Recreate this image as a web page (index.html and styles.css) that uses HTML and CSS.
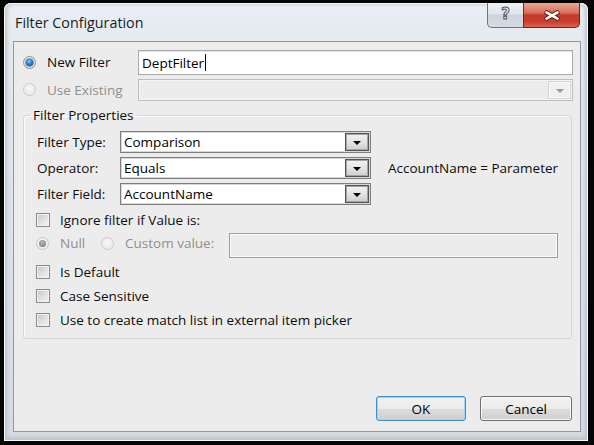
FILE: index.html
```html
<!DOCTYPE html>
<html>
<head>
<meta charset="utf-8">
<link rel="stylesheet" href="styles.css">
</head>
<body>
<div class="window">
  <div class="frame">
    <div class="titlebar">
      <div class="title">Filter Configuration</div>
      <div class="caption-buttons">
        <div class="cbtn help">?</div>
        <div class="cbtn close">
          <svg width="18" height="11" viewBox="0 0 18 11">
            <path d="M2 1.5 L16 9.5 M16 1.5 L2 9.5" stroke="#5b2119" stroke-width="4.6" fill="none"/>
            <path d="M2.6 1.9 L15.4 9.1 M15.4 1.9 L2.6 9.1" stroke="#ffffff" stroke-width="2.4" fill="none"/>
          </svg>
        </div>
      </div>
    </div>
    <div class="client">
      <div class="top-row">
        <label class="opt"><span class="radio checked"></span><span>New Filter</span></label>
        <div class="textbox">DeptFilter<span class="caret"></span></div>
      </div>
      <div class="top-row existing">
        <label class="opt disabled"><span class="radio"></span><span>Use Existing</span></label>
        <div class="combo disabled"><span class="combo-value"></span><span class="arrow"><span class="tri"></span></span></div>
      </div>
      <fieldset class="group">
        <legend>Filter Properties</legend>
        <div class="prop-grid">
          <span class="prop-label r1">Filter Type:</span>
          <div class="combo c2 r1"><span class="combo-value">Comparison</span><span class="arrow"><span class="tri"></span></span></div>
          <span class="prop-label r2">Operator:</span>
          <div class="combo c2 r2"><span class="combo-value">Equals</span><span class="arrow"><span class="tri"></span></span></div>
          <span class="expr r2">AccountName = Parameter</span>
          <span class="prop-label r3">Filter Field:</span>
          <div class="combo c2 r3"><span class="combo-value">AccountName</span><span class="arrow"><span class="tri"></span></span></div>
        </div>
        <label class="check-row first"><span class="checkbox"></span><span>Ignore filter if Value is:</span></label>
        <div class="value-row">
          <label class="opt disabled null-opt"><span class="radio checked-disabled"></span><span>Null</span></label>
          <label class="opt disabled custom-opt"><span class="radio"></span><span>Custom value:</span></label>
          <div class="textbox disabled"></div>
        </div>
        <label class="check-row gap-lg"><span class="checkbox"></span><span>Is Default</span></label>
        <label class="check-row"><span class="checkbox"></span><span>Case Sensitive</span></label>
        <label class="check-row"><span class="checkbox"></span><span>Use to create match list in external item picker</span></label>
      </fieldset>
      <div class="buttons">
        <button class="btn default">OK</button>
        <button class="btn cancel">Cancel</button>
      </div>
    </div>
  </div>
</div>
</body>
</html>
```

FILE: styles.css
```css
* { box-sizing: border-box; }
html, body { margin: 0; padding: 0; }
body {
  width: 594px;
  height: 445px;
  overflow: hidden;
  background: #000;
  font-family: "Open Sans", "Noto Sans", sans-serif;
  font-size: 13.5px;
  color: #0c0c0c;
}
.window {
  width: 594px;
  height: 445px;
  padding: 3px 6px 4px 4px;
  background: #050505;
}
.frame {
  height: 100%;
  display: flex;
  flex-direction: column;
  border-radius: 7px 7px 0 0;
  background: linear-gradient(to bottom, #eaeff4 0, #e4e9ef 40px, #d5dbe2 100%);
  box-shadow: inset 0 0 0 1px #f6f8fa, inset 0 -3px 4px #b9c0c8, inset 3px 0 4px #c3c9d0, inset -3px 0 4px #c3c9d0;
}
.titlebar {
  height: 38px;
  display: flex;
  align-items: flex-start;
  padding-left: 11px;
}
.title {
  margin-top: 10px;
  font-size: 14.3px;
  line-height: 20px;
  color: #1b1b1b;
}
.caption-buttons {
  margin-left: auto;
  margin-right: 8px;
  display: flex;
  height: 25px;
}
.cbtn {
  height: 25px;
  display: flex;
  align-items: center;
  justify-content: center;
}
.help {
  width: 36px;
  border: 1px solid #6c7582;
  border-top: none;
  border-right: none;
  border-radius: 0 0 0 5px;
  background: linear-gradient(to bottom, #eef1f4 0, #e1e6eb 45%, #cdd4dc 50%, #d6dce3 100%);
  font-family: "DejaVu Sans", sans-serif;
  font-weight: bold;
  font-size: 15px;
  color: #f2f2f2;
  -webkit-text-stroke: 1px #555;
  line-height: 1;
  padding-bottom: 2px;
}
.close {
  width: 57px;
  border: 1px solid #6a2a22;
  border-top: none;
  border-radius: 0 0 5px 0;
  background: linear-gradient(to bottom, #e9a896 0, #d8705e 40%, #c63a2a 52%, #c83e2e 78%, #d9654f 100%);
}
.client {
  flex: 1;
  margin: 0 7px 9px 9px;
  border: 1px solid #8d98a5;
  background: #ececec;
  padding: 8px 7px 10px 9px;
  display: flex;
  flex-direction: column;
}
.top-row {
  display: grid;
  grid-template-columns: 115px 1fr;
  height: 25px;
  align-items: center;
}
.top-row.existing {
  height: 22px;
  margin-top: 4px;
}
.top-row > .opt { padding-bottom: 1px; }
.opt {
  display: flex;
  align-items: center;
}
.opt.disabled { color: #8f8f8f; }
.radio {
  width: 13px;
  height: 13px;
  border-radius: 50%;
  border: 1px solid #8e9194;
  background: radial-gradient(circle at 50% 40%, #fafafa 0, #e2e2e2 60%, #cfcfcf 100%);
  margin-right: 11px;
  display: flex;
  align-items: center;
  justify-content: center;
  flex: none;
}
.radio.checked::after {
  content: "";
  width: 7px;
  height: 7px;
  border-radius: 50%;
  background: radial-gradient(circle at 45% 35%, #7fd0ff 0, #2a7fd0 45%, #0d3f78 100%);
  box-shadow: 0 0 0 0.5px #143a66;
}
.opt.disabled .radio {
  border-color: #c9c9c9;
  background: radial-gradient(circle at 50% 40%, #f7f7f7 0, #ececec 70%, #e0e0e0 100%);
}
.radio.checked-disabled::after {
  content: "";
  width: 7px;
  height: 7px;
  border-radius: 50%;
  background: radial-gradient(circle at 45% 35%, #b8b8b8 0, #8a8a8a 70%, #7a7a7a 100%);
}
.textbox {
  height: 25px;
  border: 1px solid #a6a9ad;
  background: #fff;
  padding-left: 3px;
  display: flex;
  align-items: center;
  color: #000;
  box-shadow: inset 0 1px 0 #e3e3e3;
}
.caret {
  width: 1px;
  height: 17px;
  background: #000;
  margin-left: 1px;
}
.textbox.disabled {
  background: #ececec;
  border-color: #9d9d9d;
  box-shadow: inset 0 0 0 1px #fbfbfb;
  height: 25px;
  flex: 1;
  align-self: flex-start;
}
.combo {
  height: 22px;
  border: 1px solid #7e7e7e;
  background: #fff;
  display: flex;
  align-items: stretch;
  box-shadow: inset 0 0 0 1px #d8d8d8;
}
.combo-value {
  flex: 1;
  padding-left: 3px;
  display: flex;
  align-items: center;
  color: #000;
}
.arrow {
  width: 24px;
  border: 1px solid #555;
  box-shadow: inset 0 0 0 1px #a4a4a4;
  background: linear-gradient(to bottom, #f3f3f3 0, #e4e4e4 50%, #cdcdcd 100%);
  display: flex;
  align-items: center;
  justify-content: center;
  margin: 1px;
}
.tri {
  width: 0;
  height: 0;
  border-left: 4px solid transparent;
  border-right: 4px solid transparent;
  border-top: 4px solid #000;
  margin-top: 2px;
}
.combo.disabled {
  border-color: #bdbdbd;
  background: #ececec;
  box-shadow: inset 0 0 0 1px #f5f5f5;
}
.combo.disabled .arrow {
  border-color: #d4d4d4;
  box-shadow: inset 0 0 0 1px #fafafa;
  background: #f0f0f0;
  width: 23px;
}
.combo.disabled .tri { border-top-color: #9a9a9a; }
.group {
  margin: 6px 1px 0 0;
  border: 1px solid #cdd9df;
  border-radius: 3px;
  padding: 8px 13px 9px 12px;
  min-width: 0;
  box-shadow: inset 1px 1px 0 #fafcfd;
}
.group legend {
  padding: 0 3px;
  margin-left: -6px;
  line-height: 16px;
  color: #0c0c0c;
}
.prop-grid {
  display: grid;
  grid-template-columns: 84px 251px auto;
  grid-template-rows: 22px 22px 22px;
  row-gap: 4px;
  align-items: center;
}
.prop-label { grid-column: 1; padding-left: 1px; }
.c2 { grid-column: 2; }
.r1 { grid-row: 1; }
.r2 { grid-row: 2; }
.r3 { grid-row: 3; }
.expr {
  grid-column: 3;
  padding-left: 17px;
  white-space: nowrap;
}
.check-row {
  display: flex;
  align-items: center;
  height: 18px;
  margin-top: 6px;
}
.check-row.first { margin-top: 6px; }
.check-row.gap-lg { margin-top: 5px; }
.checkbox {
  width: 14px;
  height: 14px;
  border: 1px solid #8a8b8b;
  background: linear-gradient(135deg, #c4c4c4 0, #e0e0e0 50%, #f5f5f5 100%);
  box-shadow: inset 0 0 0 1px #f3f3f3;
  margin-right: 10px;
  flex: none;
}
.value-row {
  display: flex;
  align-items: flex-start;
  height: 25px;
  margin-top: 4px;
}
.value-row .opt { height: 20px; }
.null-opt { width: 65px; }
.custom-opt { width: 128px; }
.buttons {
  margin-top: auto;
  display: flex;
  justify-content: flex-end;
  gap: 14px;
  padding-right: 1px;
}
.btn {
  height: 25px;
  font-family: inherit;
  font-size: 13.5px;
  color: #000;
  border-radius: 3px;
  background: linear-gradient(to bottom, #f2f2f2 0, #ebebeb 50%, #dddddd 51%, #cfcfcf 100%);
  padding: 0;
}
.btn.default {
  width: 90px;
  border: 1px solid #3c8fd0;
  box-shadow: inset 0 0 0 1px #9fd4f5;
}
.btn.cancel {
  width: 92px;
  border: 1px solid #707070;
  box-shadow: inset 0 0 0 1px #f8f8f8;
}
```
